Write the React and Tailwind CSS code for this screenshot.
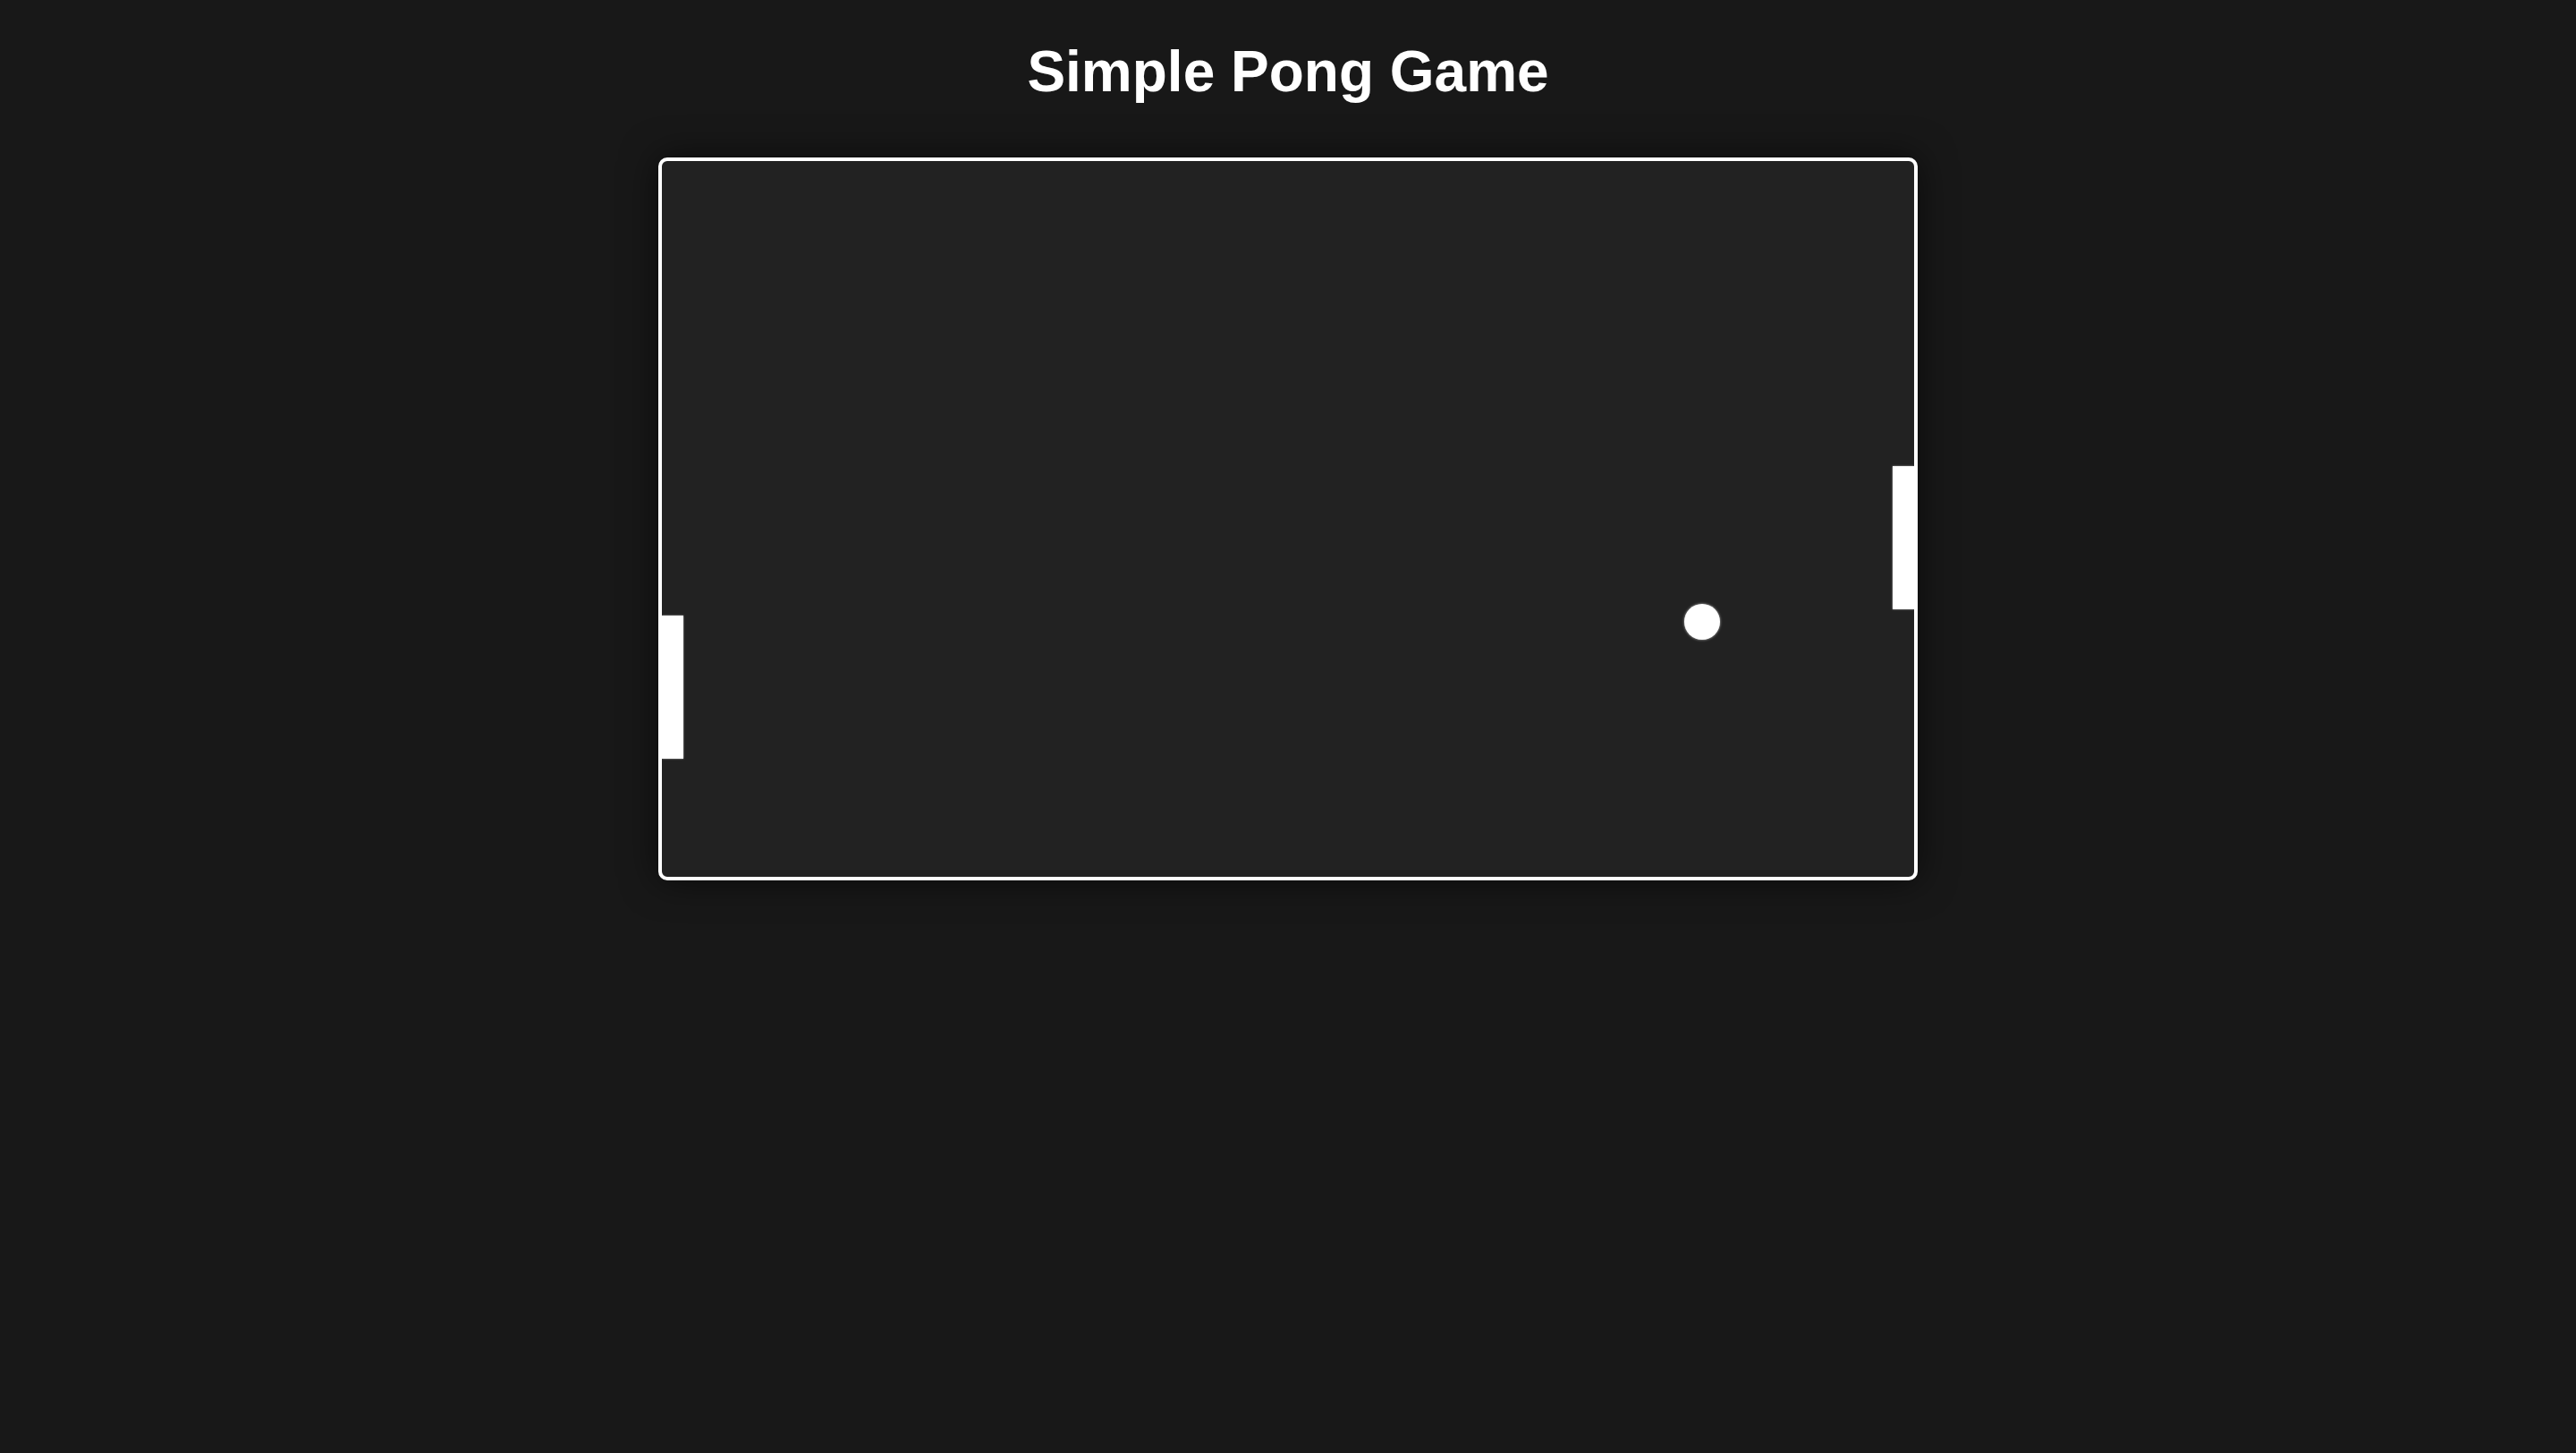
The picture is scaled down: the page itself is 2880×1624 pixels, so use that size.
// Static snapshot of the pong board: title on top, bordered play field below.
function Paddle({ side, top }) {
  const edge = side === 'left' ? 'left-0' : 'right-0'
  return (
    <div
      className={`absolute ${edge} w-[24px] h-[160px] bg-white shadow-[0_0_2px_rgba(255,255,255,0.6)]`}
      style={{ top }}
    />
  )
}

export default function App() {
  return (
    <div className="min-h-screen bg-[#181818] flex flex-col items-center font-['Liberation_Sans',Arial,sans-serif]">
      <h1 className="mt-[48px] text-[64px] leading-[64px] font-bold text-white">Simple Pong Game</h1>

      <div className="mt-[64px] relative w-[1408px] h-[808px] border-4 border-white rounded-[10px] bg-[#222222] overflow-hidden shadow-[0_0_40px_rgba(0,0,0,0.6)]">
        <Paddle side="left" top={508} />
        <Paddle side="right" top={341} />
        <div className="absolute left-[1143px] top-[495px] w-[40px] h-[40px] rounded-full bg-white shadow-[0_0_3px_rgba(255,255,255,0.7)]" />
      </div>
    </div>
  )
}
